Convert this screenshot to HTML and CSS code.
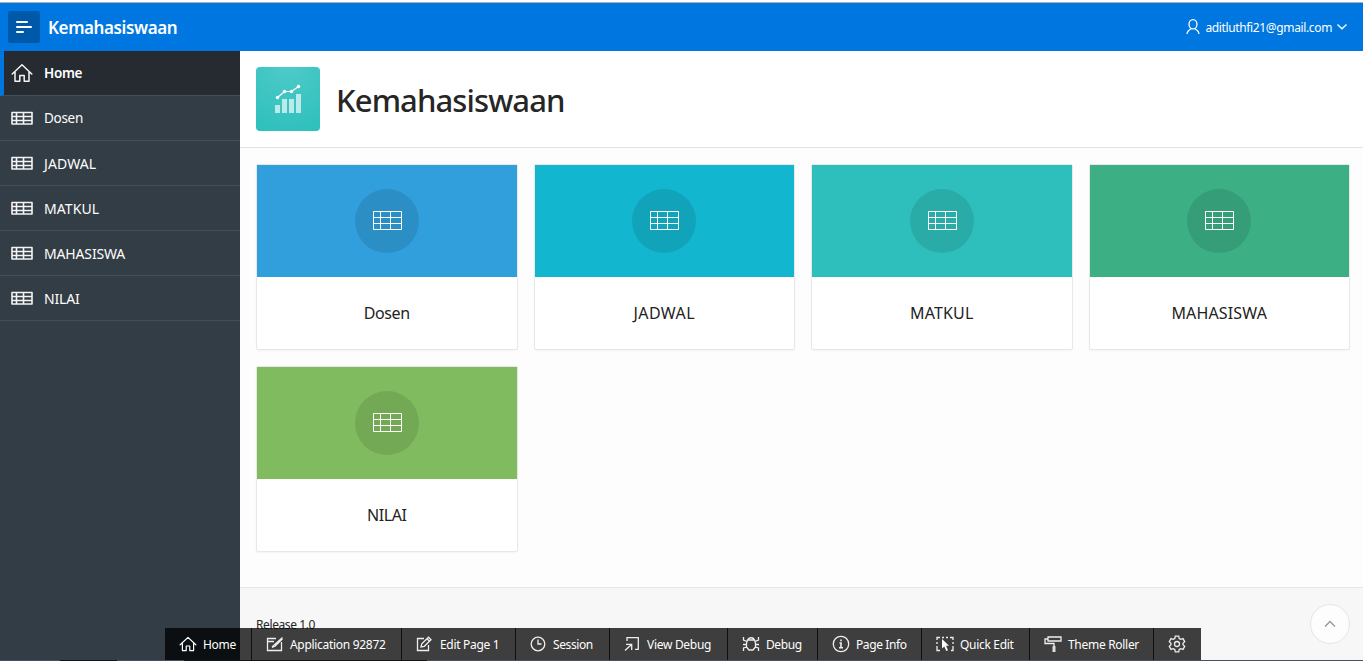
FILE: index.html
```html
<!DOCTYPE html>
<html lang="en">
<head>
<meta charset="utf-8">
<title>Kemahasiswaan</title>
<link rel="stylesheet" href="styles.css">
</head>
<body>
<svg class="defs" width="0" height="0">
  <symbol id="grid-sm" viewBox="0 0 22 14"><path d="M1 1.500h20v11.500H1zM1 5.500h20M1 9.500h20M5.500 1.500v11M12.500 1.500v11" fill="none" stroke="currentColor" stroke-width="1.600" stroke-linejoin="round"/></symbol>
  <symbol id="grid-lg" viewBox="0 0 30 20"><path d="M1.500 1.500h28v18h-28zM1.500 7.500h28M1.500 13.500h28M8.500 1.500v18M18.500 1.500v18" fill="none" stroke="currentColor"/></symbol>
  <symbol id="home" viewBox="0 0 22 20"><path d="M1.200 11 11 1.700 20.800 11M4 9v9.200h4.800v-5.700h4.400v5.700H18V9" fill="none" stroke="currentColor" stroke-width="1.500" stroke-linejoin="round" stroke-linecap="round"/></symbol>
</svg>
<div class="page">
  <header class="header">
    <button class="menu-button"><svg width="18" height="12" viewBox="0 0 18 12"><path d="M2 1h10M2 6h14M2 11h6" stroke="#fff" stroke-width="2" stroke-linecap="round"/></svg></button>
    <span class="brand">Kemahasiswaan</span>
    <div class="user">
      <svg width="14" height="16" viewBox="0 0 14 16"><ellipse cx="7" cy="5.300" rx="4" ry="4.600"/><path d="M1 15c.2-3 1.800-4 4.200-5.300M13 15c-.2-3-1.800-4-4.200-5.300"/></svg>
      <span class="email">aditluthfi21@gmail.com</span>
      <svg width="12" height="8" viewBox="0 0 12 8"><path d="m1.500 1.500 4.500 4.300 4.500-4.300"/></svg>
    </div>
  </header>
  <div class="body">
    <nav class="sidebar">
      <a class="nav-item active"><svg width="22" height="20"><use href="#home"/></svg><span>Home</span></a>
      <a class="nav-item"><svg width="22" height="14"><use href="#grid-sm"/></svg><span>Dosen</span></a>
      <a class="nav-item caps loose"><svg width="22" height="14"><use href="#grid-sm"/></svg><span>JADWAL</span></a>
      <a class="nav-item caps loose"><svg width="22" height="14"><use href="#grid-sm"/></svg><span>MATKUL</span></a>
      <a class="nav-item caps"><svg width="22" height="14"><use href="#grid-sm"/></svg><span>MAHASISWA</span></a>
      <a class="nav-item caps"><svg width="22" height="14"><use href="#grid-sm"/></svg><span>NILAI</span></a>
    </nav>
    <main class="main">
      <div class="hero">
        <div class="app-icon"><svg width="28" height="30" viewBox="0 0 28 30"><path d="M1 21h5v8H1zM8 15h5v14H8zM15 15h5v14h-5zM22 10h5v19h-5z" fill="#fff" fill-opacity=".65"/><path d="m3.500 13.500 7-6h7l7-5" fill="none" stroke="#fff" stroke-width="1.200"/><g fill="#fff"><circle cx="3.500" cy="13.500" r="1.700"/><circle cx="10.500" cy="7.500" r="1.700"/><circle cx="17.500" cy="7.500" r="1.700"/><circle cx="24.500" cy="2.500" r="1.700"/></g></svg></div>
        <h1>Kemahasiswaan</h1>
      </div>
      <div class="cards">
        <a class="card blue"><div class="top"><i><svg width="30" height="20"><use href="#grid-lg"/></svg></i></div><h3>Dosen</h3></a>
        <a class="card cyan"><div class="top"><i><svg width="30" height="20"><use href="#grid-lg"/></svg></i></div><h3>JADWAL</h3></a>
        <a class="card teal"><div class="top"><i><svg width="30" height="20"><use href="#grid-lg"/></svg></i></div><h3>MATKUL</h3></a>
        <a class="card green"><div class="top"><i><svg width="30" height="20"><use href="#grid-lg"/></svg></i></div><h3>MAHASISWA</h3></a>
        <a class="card lime"><div class="top"><i><svg width="30" height="20"><use href="#grid-lg"/></svg></i></div><h3>NILAI</h3></a>
      </div>
      <footer class="footer"><span>Release 1.0</span></footer>
    </main>
  </div>
  <a class="to-top"><svg width="12" height="8" viewBox="0 0 12 8"><path d="M1 6.500 6 1.500l5 5" fill="none" stroke="#999" stroke-width="1.400"/></svg></a>
  <div class="toolbar">
    <a class="tool t-home"><svg width="18" height="16"><use href="#home"/></svg><span>Home</span></a>
    <a class="tool t-app"><svg width="18" height="16" viewBox="0 0 18 16"><path d="M10 2.500H1.500v12h14V6M1.500 5.500H8M6 11 16.500 1.500M6 11.300l3-1 7.500-7.500"/></svg><span>Application 92872</span></a>
    <a class="tool t-edit"><svg width="16" height="16" viewBox="0 0 16 16"><path d="M8 2.500H1.500v12h11V9M5 11l.8-3.200L12.500 1.200 15 3.700 8.300 10.300zM11 2.700l2.500 2.500"/></svg><span>Edit Page 1</span></a>
    <a class="tool t-session"><svg width="16" height="16" viewBox="0 0 16 16"><circle cx="8" cy="8" r="6.800"/><path d="M8 3.500V8h3.500"/></svg><span>Session</span></a>
    <a class="tool t-view"><svg width="16" height="16" viewBox="0 0 16 16"><path d="M3 5V1.700h11.300v11.600H11M1 14.500l6.500-6M2 8.300h5.700V14"/></svg><span>View Debug</span></a>
    <a class="tool t-debug"><svg width="18" height="16" viewBox="0 0 18 16"><path d="M5.500 4h7l1 3v4L11 14H7l-2.500-3V7zM6 4c0-3 6-3 6 0M1 8.500h3.500M13.500 8.500H17M5 5.500 1.500 4V1M13 5.500 16.500 4V1M5 11l-3.500 1v3M13 11l3.500 1v3"/></svg><span>Debug</span></a>
    <a class="tool t-info"><svg width="18" height="18" viewBox="0 0 18 18"><circle cx="9" cy="9" r="7.700"/><path d="M7.500 8H9v4.500M7 12.800h4M9 4.500v1.800" stroke-width="1.600"/></svg><span>Page Info</span></a>
    <a class="tool t-quick"><svg width="18" height="16" viewBox="0 0 18 16"><path d="M1 4V1.500h3M6 1.500h2M10 1.500h2M14 1.500h3V4M17 6v2M17 10v4.500h-2M1 6v2M1 10v4.500h3"/><path d="M6 3v9.500l2.300-2 2 4.500 1.700-.8-2-4.400h3z" fill="#fff" stroke="none"/></svg><span>Quick Edit</span></a>
    <a class="tool t-theme"><svg width="18" height="16" viewBox="0 0 18 16"><path d="M4 1h13v4H4zM4 3H1v4.500h9V10"/><path d="M8.500 10h3v6h-3z" fill="#ddd" stroke="none"/></svg><span>Theme Roller</span></a>
    <a class="tool t-gear"><svg width="18" height="18" viewBox="0 0 18 18"><path d="M7.300 1.200h3.400l.5 2.300 1.500.9 2.300-.8 1.700 3L15 8.200v1.600l1.700 1.600-1.700 3-2.300-.8-1.500.9-.5 2.300H7.300l-.5-2.300-1.500-.9-2.300.8-1.700-3L3 9.800V8.200L1.300 6.600l1.700-3 2.300.8 1.500-.9z"/><circle cx="9" cy="9" r="2.500"/></svg></a>
  </div>
  <div class="edge"></div>
</div>
</body>
</html>
```
FILE: styles.css
```css
* { box-sizing: border-box; }
body { margin: 0; background: #fff; font-family: "Noto Sans", "Open Sans", sans-serif; color: #262626; }
.defs { position: absolute; }
.page { height: 661px; overflow: hidden; position: relative; display: flex; flex-direction: column; padding-top: 2px; }
.header { height: 49px; flex: none; background: #0077e0; border-top: 1px solid #b0b0b0; display: flex; align-items: center; padding: 0 15px 0 8px; color: #fff; }
.menu-button { width: 32px; height: 32px; border: 0; border-radius: 2px; background: #0059a8; padding: 0; display: flex; align-items: center; justify-content: center; }
.brand { margin-left: 8px; font-size: 17px; font-weight: 600; letter-spacing: -.4px; }
.user { margin-left: auto; display: flex; align-items: center; font-size: 12px; }
.user svg { fill: none; stroke: #fff; stroke-width: 1.3; }
.email { margin: 0 4px 0 5px; letter-spacing: -.36px; }
.body { flex: 1; display: flex; min-height: 0; }
.sidebar { width: 240px; flex: none; background: #333d45; }
.nav-item { height: 45px; border-bottom: 1px solid #444e56; display: flex; align-items: center; gap: 11px; padding-left: 11px; color: #fff; font-size: 13.5px; letter-spacing: -.3px; }
.nav-item.active { background: #252b31; border-left: 4px solid #0077e0; padding-left: 7px; font-weight: 600; }
.nav-item.caps { font-size: 14px; letter-spacing: -.15px; }
.nav-item.loose { letter-spacing: .1px; }
.nav-item svg { color: #f4f4f4; }
.main { flex: 1; display: flex; flex-direction: column; background: #fdfdfd; }
.hero { height: 97px; flex: none; display: flex; align-items: center; gap: 16px; padding-left: 16px; background: #fff; border-bottom: 1px solid #e3e3e3; }
.app-icon { width: 64px; height: 64px; border-radius: 4px; background: radial-gradient(circle at 50% 0, #4ecac8, #2dbfbc); display: flex; align-items: center; justify-content: center; }
h1 { margin: 0; font-size: 31px; font-weight: 500; line-height: 40px; padding-top: 1px; letter-spacing: -.88px; }
.cards { flex: 1; display: grid; grid-template-columns: repeat(4, 1fr); grid-auto-rows: 186px; gap: 16px; padding: 16px 13px 0 16px; }
.card { background: #fff; border: 1px solid #e8e8e8; border-radius: 2px; box-shadow: 0 1px 2px rgba(0,0,0,.04); }
.top { height: 112px; display: flex; align-items: center; justify-content: center; color: #fff; }
.top i { width: 64px; height: 64px; border-radius: 50%; background: rgba(0,0,0,.1); display: flex; align-items: center; justify-content: center; padding-bottom: 2px; }
.card h3 { margin: 0; height: 72px; line-height: 72px; text-align: center; font-size: 16px; font-weight: 400; color: #222; }
.blue h3, .lime h3 { letter-spacing: -.4px; }
.cyan h3 { letter-spacing: .4px; }
.teal h3, .green h3 { letter-spacing: .15px; }
.blue .top { background: #309fdb; }
.cyan .top { background: #13b6cf; }
.teal .top { background: #2ebfbc; }
.green .top { background: #3caf85; }
.lime .top { background: #81bb5f; }
.footer { height: 74px; flex: none; border-top: 1px solid #e8e8e8; background: #f7f7f7; padding: 28px 16px 0; font-size: 12px; line-height: 18px; }
.footer span { letter-spacing: -.4px; }
.to-top { position: absolute; right: 13px; top: 604px; width: 40px; height: 40px; border: 1px solid #e5e5e5; border-radius: 50%; background: #fdfdfd; display: flex; align-items: center; justify-content: center; }
.toolbar { position: absolute; left: 165px; top: 628px; height: 32px; display: flex; background: rgba(0,0,0,.75); color: #fff; font-size: 12px; }
.tool { display: flex; align-items: center; gap: 6px; padding-left: 14px; border-right: 1px solid #101010; white-space: nowrap; letter-spacing: -.3px; }
.tool svg { flex: none; fill: none; stroke: #eee; stroke-width: 1.3; }
.t-home { width: 87px; }
.t-app { width: 150px; }
.t-edit { width: 114px; gap: 8px; }
.t-session { width: 94px; gap: 7px; letter-spacing: -.4px; }
.t-view { width: 118px; gap: 7px; }
.t-debug { width: 90px; letter-spacing: -.4px; }
.t-info { width: 104px; letter-spacing: -.4px; }
.t-quick { width: 108px; }
.t-theme { width: 124px; }
.t-gear { width: 47px; border: 0; }
.edge { position: absolute; left: 0; right: 0; bottom: 0; height: 1px; background: linear-gradient(90deg, #435166 60px, #11151a 60px, #11151a 117px, #435166 117px, #435166 184px, #11151a 184px, #11151a 427px, #435166 427px); }
```
